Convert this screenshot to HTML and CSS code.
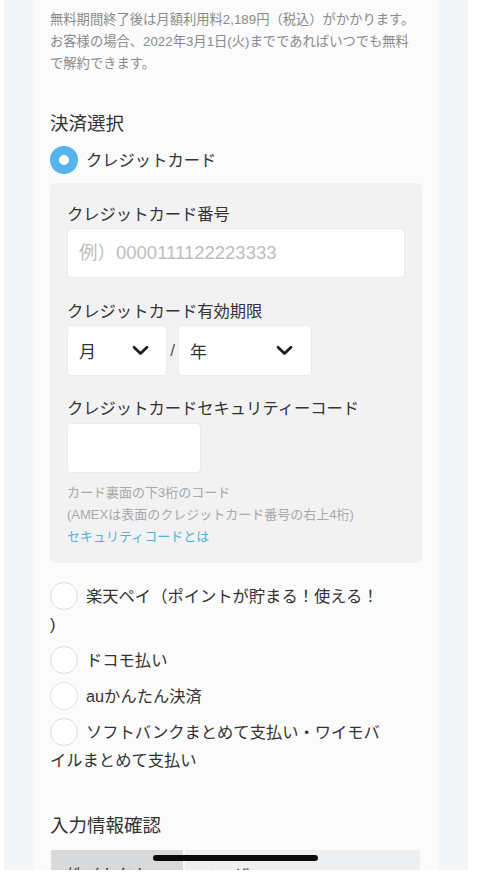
FILE: index.html
```html
<!DOCTYPE html>
<html lang="ja">
<head>
<meta charset="utf-8">
<title>決済選択</title>
<link rel="stylesheet" href="styles.css">
</head>
<body>
<div class="screen">
  <main class="panel">
    <p class="notice"><span class="notice-line">無料期間終了後は月額利用料2,189円（税込）がかかります。</span><span class="notice-line">お客様の場合、2022年3月1日(火)までであればいつでも無料</span><span class="notice-line">で解約できます。</span></p>

    <section class="payment">
      <h2 class="section-title">決済選択</h2>
      <div class="option option-selected"><span class="radio radio-on"></span><span class="option-label">クレジットカード</span></div>

      <div class="card-box">
        <div class="field">
          <div class="field-label">クレジットカード番号</div>
          <input class="text-input" type="text" placeholder="例）0000111122223333">
        </div>
        <div class="field">
          <div class="field-label">クレジットカード有効期限</div>
          <div class="expiry">
            <div class="select select-month"><span>月</span><svg class="chevron" width="17" height="11" viewBox="0 0 17 11"><path d="M2 2.2 L8.5 8.5 L15 2.2" fill="none" stroke="#1e1e1e" stroke-width="2.8" stroke-linecap="round" stroke-linejoin="round"/></svg></div>
            <span class="slash">/</span>
            <div class="select select-year"><span>年</span><svg class="chevron" width="17" height="11" viewBox="0 0 17 11"><path d="M2 2.2 L8.5 8.5 L15 2.2" fill="none" stroke="#1e1e1e" stroke-width="2.8" stroke-linecap="round" stroke-linejoin="round"/></svg></div>
          </div>
        </div>
        <div class="field">
          <div class="field-label">クレジットカードセキュリティーコード</div>
          <input class="text-input input-short" type="text">
        </div>
        <div class="notes">
          <div>カード裏面の下3桁のコード</div>
          <div>(AMEXは表面のクレジットカード番号の右上4桁)</div>
          <div class="link">セキュリティコードとは</div>
        </div>
      </div>

      <div class="options">
        <div class="option"><span class="radio"></span><span class="option-label">楽天ペイ（ポイントが貯まる！使える！<br>)</span></div>
        <div class="option"><span class="radio"></span><span class="option-label">ドコモ払い</span></div>
        <div class="option"><span class="radio"></span><span class="option-label">auかんたん決済</span></div>
        <div class="option"><span class="radio"></span><span class="option-label">ソフトバンクまとめて支払い・ワイモバイルまとめて支払い</span></div>
      </div>
    </section>

    <section class="confirm">
      <h2 class="section-title">入力情報確認</h2>
      <div class="confirm-table">
        <div class="cell cell-head">姓（カタカナ）</div>
        <div class="cell cell-body">ユーザー</div>
      </div>
    </section>
  </main>
  <div class="home-indicator"></div>
</div>
</body>
</html>
```
FILE: styles.css
```css
* { box-sizing: border-box; }

html, body {
  margin: 0;
  padding: 0;
  background: #ffffff;
}

body {
  font-family: "Liberation Sans", "Noto Sans CJK JP", sans-serif;
  color: #333333;
}

.screen {
  position: relative;
  width: 464px;
  height: 870px;
  margin-left: 4px;
  overflow: hidden;
  background: #f4f5f7;
}

.panel {
  width: 405px;
  min-height: 870px;
  margin-left: 29px;
  padding: 9px 16px 0 17px;
  background: #fbfbfc;
}

.notice {
  margin: 0;
  font-size: 13.3px;
  line-height: 22px;
  color: #8a8a8a;
}

.notice-line {
  display: block;
  white-space: nowrap;
}

.section-title {
  margin: 36px 0 0;
  font-size: 18.5px;
  line-height: 26px;
  font-weight: 400;
  color: #333333;
}

.option {
  font-size: 16.3px;
  line-height: 28px;
  color: #333333;
}

.option-selected {
  margin-top: 9px;
}

.radio {
  display: inline-block;
  vertical-align: top;
  width: 28px;
  height: 28px;
  margin-right: 8px;
  border-radius: 50%;
  background: #ffffff;
  border: 1.5px solid #dddddd;
}

.radio-on {
  border: 9.5px solid #55b5ea;
}

.card-box {
  margin-top: 9px;
  padding: 18px 17px 15px;
  background: #f2f2f3;
  border-radius: 5px;
}

.field + .field {
  margin-top: 20px;
}

.field:nth-child(3) {
  margin-top: 19px;
}

.field-label {
  font-size: 16.3px;
  line-height: 26px;
  color: #333333;
  margin-bottom: 1px;
}

.text-input {
  display: block;
  width: 100%;
  height: 50px;
  margin: 0;
  padding: 0 11px;
  border: 1px solid #ebebeb;
  border-radius: 4px;
  background: #ffffff;
  font-family: "Liberation Sans", "Noto Sans CJK JP", sans-serif;
  font-size: 18.5px;
  color: #333333;
  outline: none;
}

.text-input::placeholder {
  color: #bdbdbd;
}

.input-short {
  width: 134px;
  margin-top: 2px;
}

.expiry {
  display: flex;
  align-items: center;
}

.select {
  display: flex;
  align-items: center;
  justify-content: space-between;
  height: 51px;
  padding: 0 17px 0 11px;
  background: #ffffff;
  border: 1px solid #ebebeb;
  border-radius: 4px;
  font-size: 17px;
  color: #333333;
}

.select-month { width: 100px; }
.select-year { width: 134px; padding-right: 18px; }

.chevron {
  display: block;
}

.slash {
  width: 11px;
  text-align: center;
  font-size: 17px;
  color: #555555;
}

.notes {
  margin-top: 9px;
  font-size: 13px;
  line-height: 22px;
  color: #a8a8a8;
}

.link {
  color: #4fb2dd;
}

.options {
  margin-top: 19px;
  display: flex;
  flex-direction: column;
  gap: 8px;
  width: 340px;
}

.confirm .section-title {
  margin-top: 39px;
}

.confirm-table {
  display: grid;
  grid-template-columns: 132px 1fr;
  column-gap: 2px;
  margin: 11px 2px 0 1px;
}

.cell {
  padding: 13px 16px;
  font-size: 16.3px;
  line-height: 24px;
  color: #333333;
}

.cell-head { background: #d8d9db; }
.cell-body { background: #eeeff1; }

.home-indicator {
  position: absolute;
  left: 149px;
  top: 855px;
  width: 165px;
  height: 6px;
  border-radius: 3px;
  background: #0a0a0a;
}
```
